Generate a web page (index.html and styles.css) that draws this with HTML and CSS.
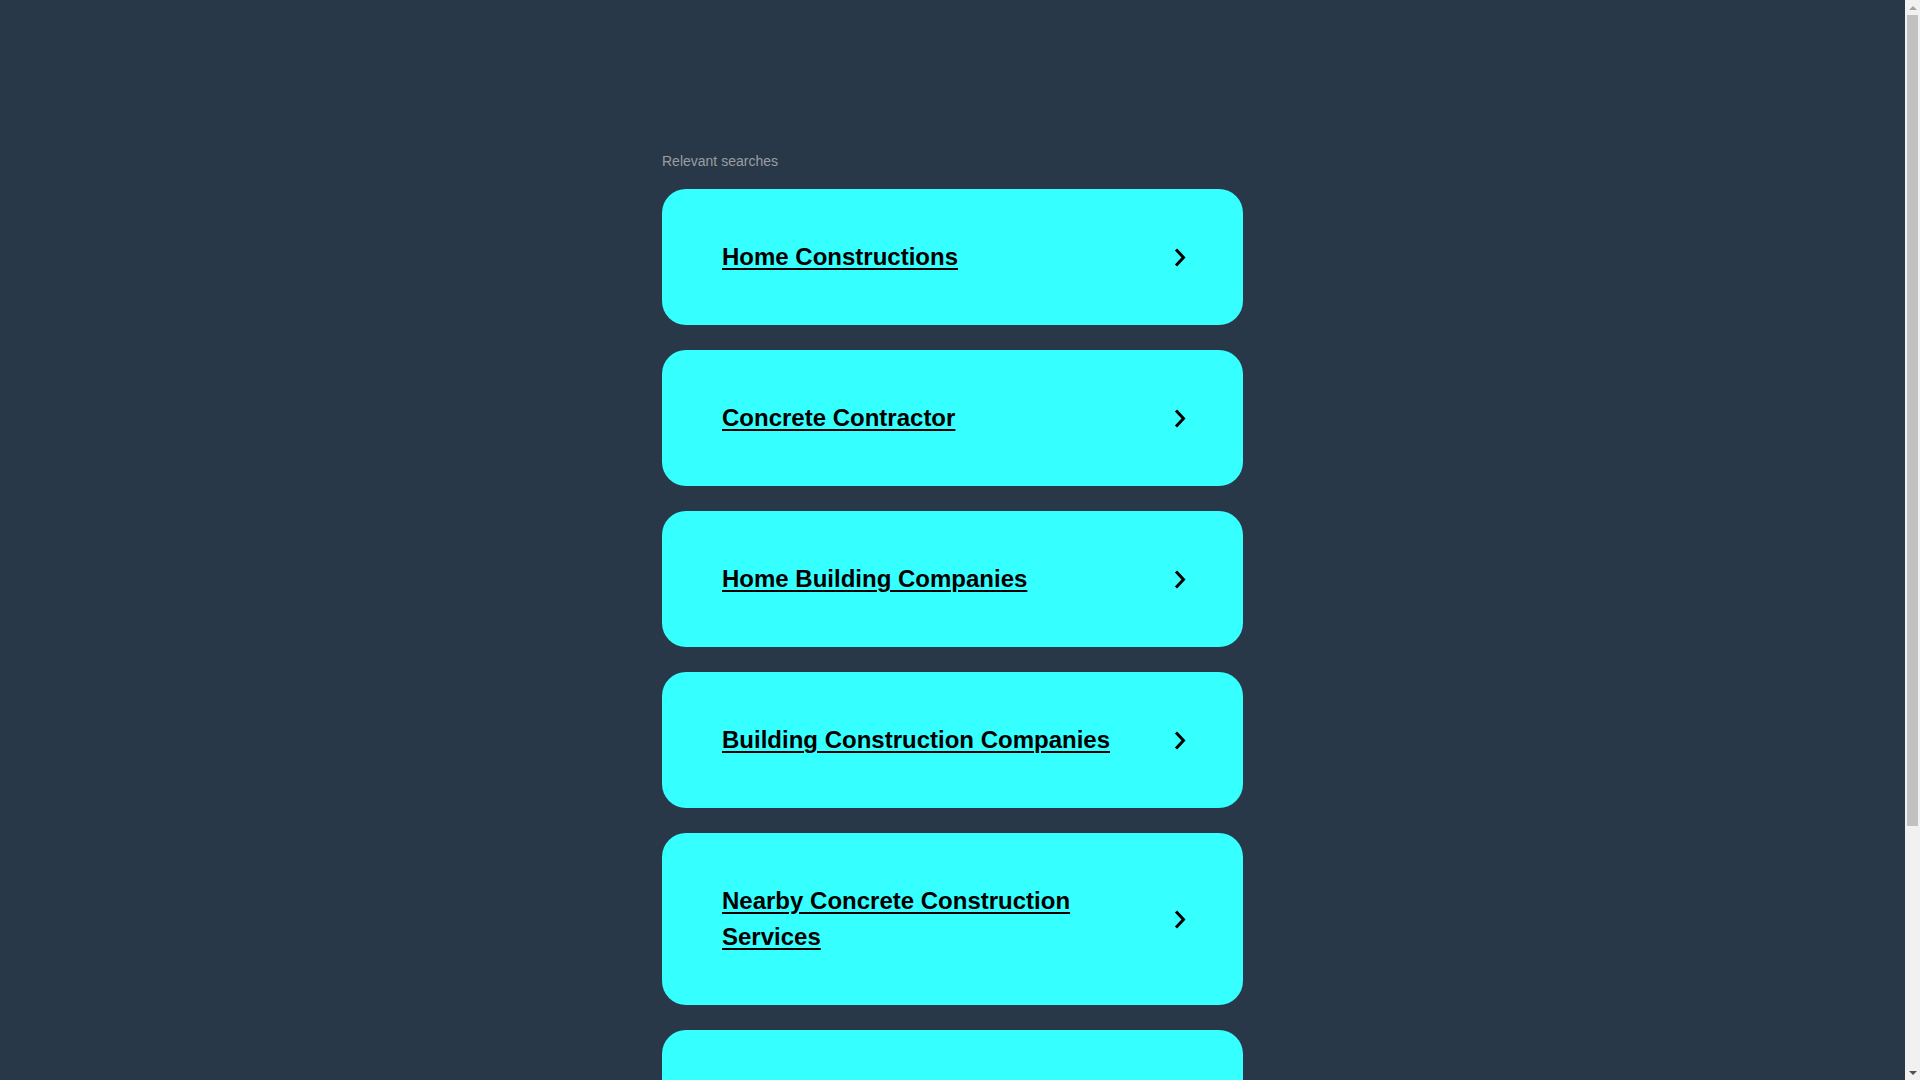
FILE: index.html
```html
<!DOCTYPE html>
<html lang="en">
<head>
<meta charset="utf-8">
<title>Relevant searches</title>
<link rel="stylesheet" href="styles.css">
</head>
<body>
<main class="page">
  <div class="label">Relevant searches</div>
  <ul class="list">
    <li><a class="card" href="#"><span class="title">Home Constructions</span><svg class="chev" viewBox="0 0 12 19" width="12" height="19"><path d="M2 1.5 L9.5 9.5 L2 17.5" fill="none" stroke="#000" stroke-width="3"/></svg></a></li>
    <li><a class="card" href="#"><span class="title">Concrete Contractor</span><svg class="chev" viewBox="0 0 12 19" width="12" height="19"><path d="M2 1.5 L9.5 9.5 L2 17.5" fill="none" stroke="#000" stroke-width="3"/></svg></a></li>
    <li><a class="card" href="#"><span class="title">Home Building Companies</span><svg class="chev" viewBox="0 0 12 19" width="12" height="19"><path d="M2 1.5 L9.5 9.5 L2 17.5" fill="none" stroke="#000" stroke-width="3"/></svg></a></li>
    <li><a class="card" href="#"><span class="title">Building Construction Companies</span><svg class="chev" viewBox="0 0 12 19" width="12" height="19"><path d="M2 1.5 L9.5 9.5 L2 17.5" fill="none" stroke="#000" stroke-width="3"/></svg></a></li>
    <li><a class="card" href="#"><span class="title">Nearby Concrete Construction Services</span><svg class="chev" viewBox="0 0 12 19" width="12" height="19"><path d="M2 1.5 L9.5 9.5 L2 17.5" fill="none" stroke="#000" stroke-width="3"/></svg></a></li>
    <li><a class="card card-last" href="#"><span class="title"></span></a></li>
  </ul>
</main>
<div class="scrollbar" aria-hidden="true">
  <div class="arrow arrow-up"></div>
  <div class="track"><div class="thumb"></div></div>
  <div class="arrow arrow-down"></div>
</div>
</body>
</html>
```

FILE: styles.css
```css
html, body {
  margin: 0;
  padding: 0;
  background: #283849;
}
body {
  font-family: "Liberation Sans", Arial, sans-serif;
  padding-right: 15px;
}
.page {
  width: 581px;
  margin: 0 auto;
  padding: 153px 0 210px;
}
.label {
  font-size: 14px;
  line-height: 16px;
  color: #9a9ea3;
  margin: 0 0 20px 0;
}
.list {
  list-style: none;
  margin: 0;
  padding: 0;
  display: flex;
  flex-direction: column;
  gap: 25px;
}
.card {
  display: flex;
  align-items: center;
  background: #36ffff;
  border-radius: 24px;
  padding: 50px 57px 50px 60px;
  text-decoration: none;
  color: #000;
}
.card-last {
  min-height: 36px;
}
.title {
  flex: 1;
  font-size: 24px;
  font-weight: bold;
  line-height: 36px;
  color: #000;
  text-decoration: underline;
  text-decoration-thickness: 2px;
  text-underline-offset: 3px;
  margin-right: 30px;
}
.chev {
  flex: none;
  display: block;
}
.scrollbar {
  position: fixed;
  top: 0;
  right: 0;
  width: 15px;
  height: 100vh;
  background: #f1f1f1;
  display: flex;
  flex-direction: column;
}
.arrow {
  flex: none;
  height: 15px;
  display: flex;
  align-items: center;
  justify-content: center;
}
.arrow::before {
  content: "";
  width: 0;
  height: 0;
  border-left: 4px solid transparent;
  border-right: 4px solid transparent;
}
.arrow-up::before {
  border-bottom: 4px solid #a3a3a3;
}
.arrow-down::before {
  border-top: 4px solid #505050;
}
.track {
  flex: 1;
  padding: 0 2px;
}
.thumb {
  height: 811px;
  background: #c1c1c1;
}
```
